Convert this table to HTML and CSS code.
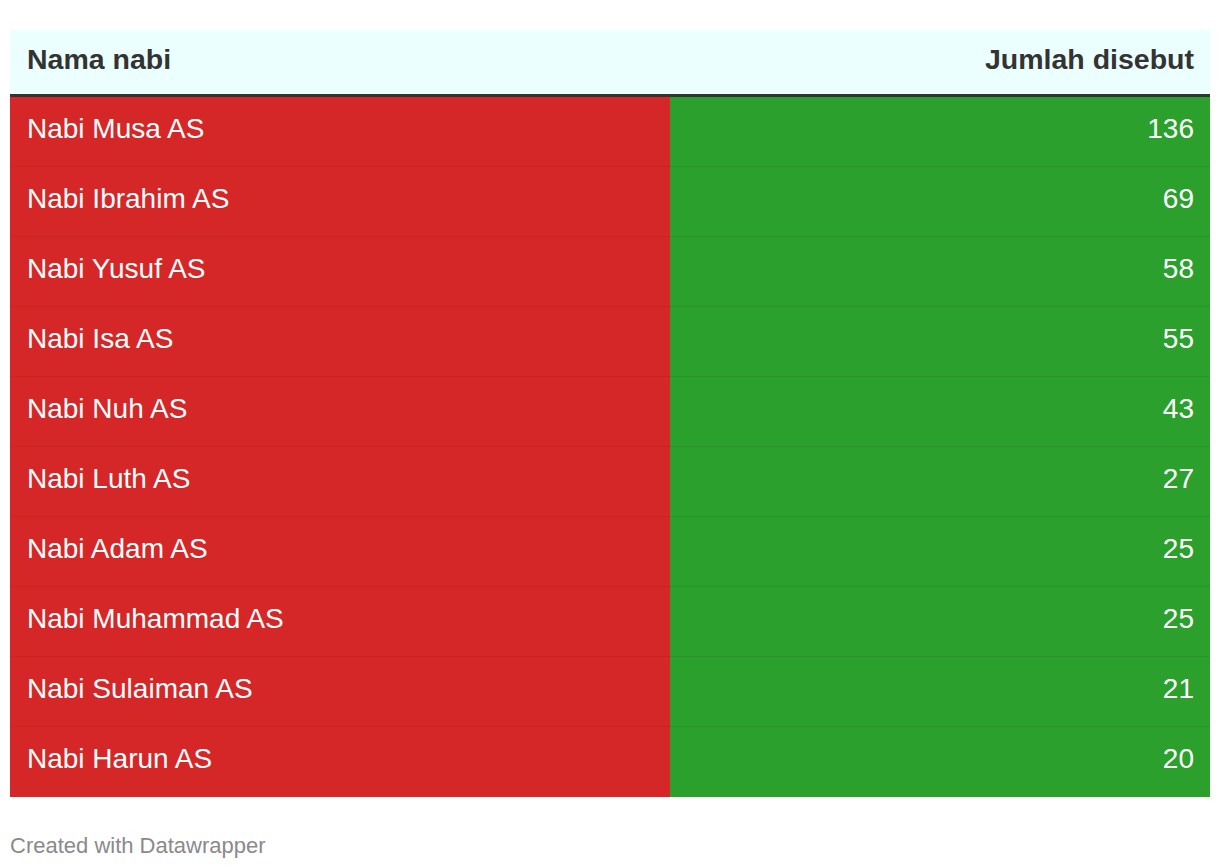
FILE: index.html
```html
<!DOCTYPE html>
<html>
<head>
<meta charset="utf-8">
<link rel="stylesheet" href="styles.css">
</head>
<body>
<div class="chart">
  <table class="tbl">
    <thead>
      <tr><th class="c-name">Nama nabi</th><th class="c-num">Jumlah disebut</th></tr>
    </thead>
    <tbody>
      <tr><td class="c-name">Nabi Musa AS</td><td class="c-num">136</td></tr>
      <tr><td class="c-name">Nabi Ibrahim AS</td><td class="c-num">69</td></tr>
      <tr><td class="c-name">Nabi Yusuf AS</td><td class="c-num">58</td></tr>
      <tr><td class="c-name">Nabi Isa AS</td><td class="c-num">55</td></tr>
      <tr><td class="c-name">Nabi Nuh AS</td><td class="c-num">43</td></tr>
      <tr><td class="c-name">Nabi Luth AS</td><td class="c-num">27</td></tr>
      <tr><td class="c-name">Nabi Adam AS</td><td class="c-num">25</td></tr>
      <tr><td class="c-name">Nabi Muhammad AS</td><td class="c-num">25</td></tr>
      <tr><td class="c-name">Nabi Sulaiman AS</td><td class="c-num">21</td></tr>
      <tr><td class="c-name">Nabi Harun AS</td><td class="c-num">20</td></tr>
    </tbody>
  </table>
  <div class="footer">Created with Datawrapper</div>
</div>
</body>
</html>
```
FILE: styles.css
```css
html, body {
  margin: 0;
  padding: 0;
  background: #ffffff;
}
body {
  font-family: "Liberation Sans", Arial, Helvetica, sans-serif;
}
.chart {
  padding: 30px 10px 0 10px;
}
.tbl {
  width: 1200px;
  border-collapse: separate;
  border-spacing: 0;
  table-layout: fixed;
}
.tbl th {
  background: #ebfffe;
  color: #333333;
  font-weight: bold;
  font-size: 28.5px;
  height: 67px;
  padding: 0 16px 6px 17px;
  border-bottom: 3px solid #333333;
  box-sizing: border-box;
}
.tbl th.c-name { width: 660px; text-align: left; }
.tbl th.c-num { text-align: right; }
.tbl td {
  color: #ffffff;
  font-size: 28px;
  height: 70px;
  padding: 0 16px 6px 17px;
  box-sizing: border-box;
  border-bottom: 1px solid rgba(0, 0, 0, 0.07);
}
.tbl tbody tr:last-child td { border-bottom: none; }
.tbl td.c-name { background: #d52728; text-align: left; }
.tbl td.c-num { background: #2ca02d; text-align: right; }
.footer {
  margin-top: 36px;
  font-size: 22px;
  color: #8a8a8a;
}
```
